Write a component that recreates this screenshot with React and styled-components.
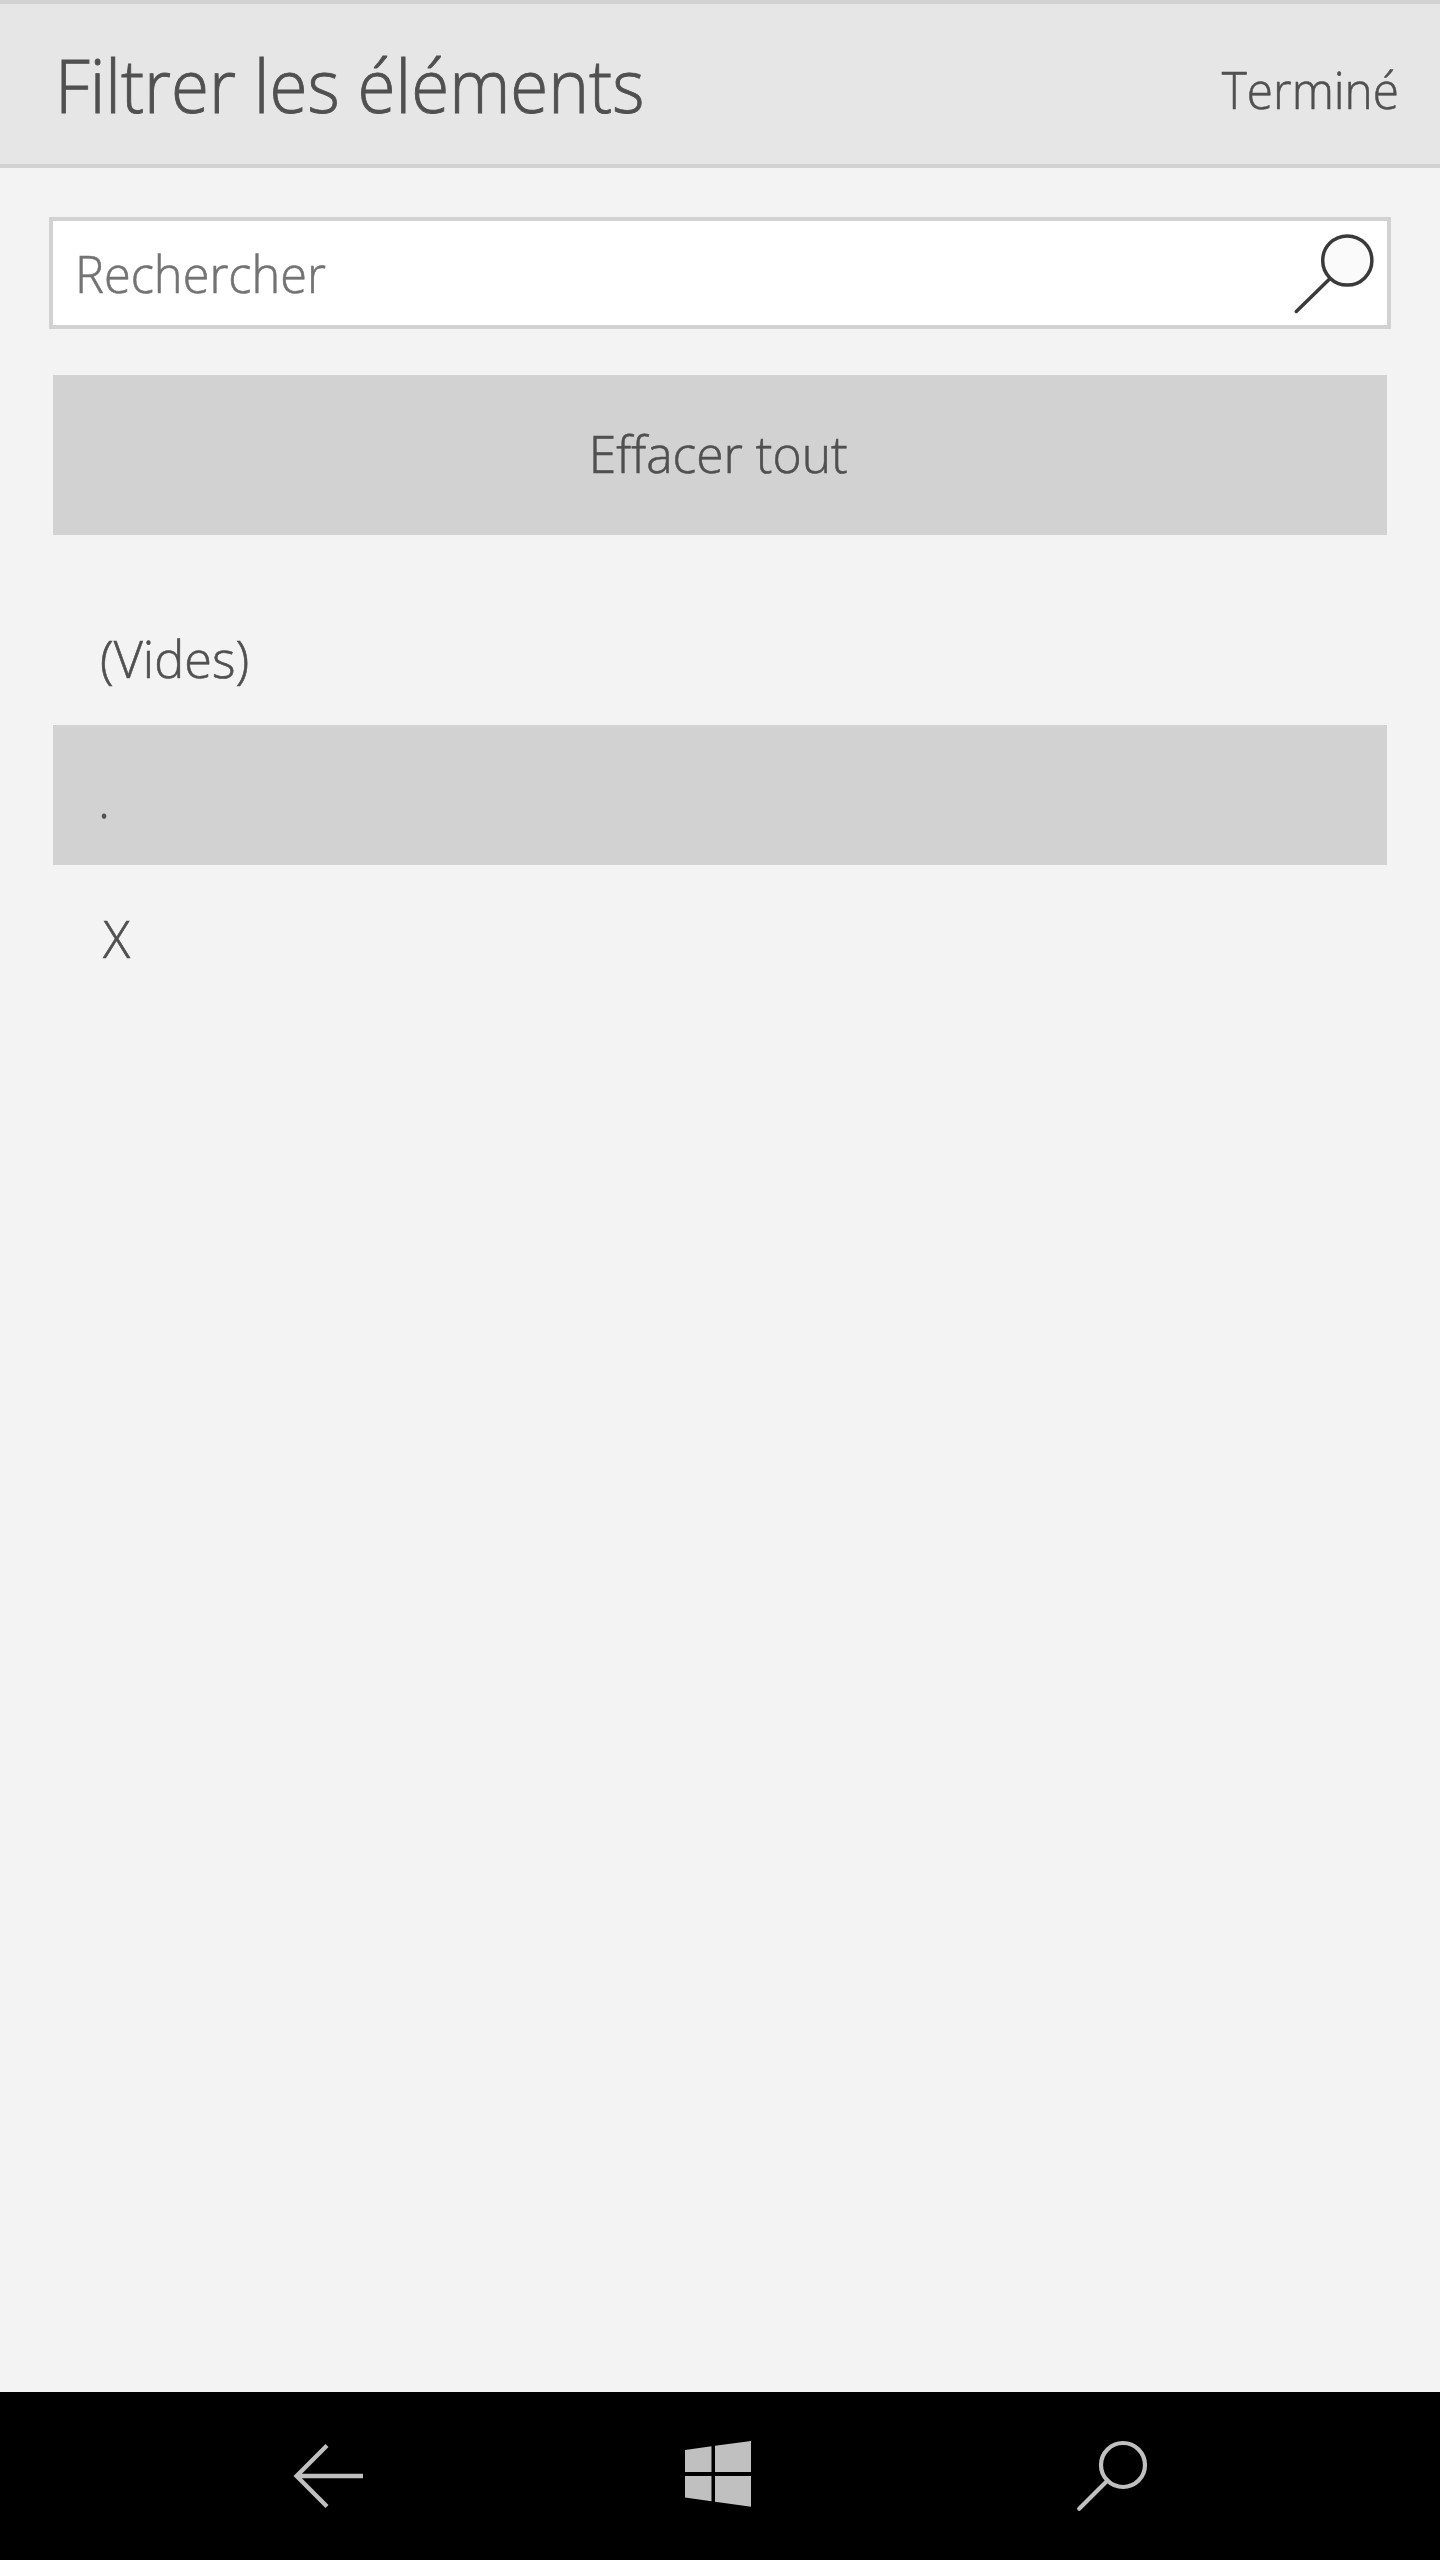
import React from 'react';
import styled, { createGlobalStyle } from 'styled-components';

const GlobalStyle = createGlobalStyle`
  * { box-sizing: border-box; }
  body { margin: 0; background: #f3f3f3; }
`;

const Screen = styled.div`
  display: flex;
  flex-direction: column;
  width: 1440px;
  height: 2560px;
  background: #f3f3f3;
  color: #505050;
  font-family: 'Open Sans', 'Noto Sans', sans-serif;
  font-weight: 300;
  font-size: 52px;
  line-height: 1;
  white-space: nowrap;
  font-variant-ligatures: none;
  -webkit-text-stroke: 0.6px currentColor;
`;

const Label = styled.span`
  display: inline-block;
  transform: scaleX(${(p) => p.$condense});
  transform-origin: ${(p) => p.$origin || 'left'} center;
`;

const Header = styled.header`
  display: flex;
  align-items: center;
  justify-content: space-between;
  flex: none;
  height: 168px;
  padding: 0 41px 0 55px;
  background: #e6e6e6;
  border: solid #d2d2d2;
  border-width: 4px 0;
`;

const Title = styled.h1`
  margin: 0;
  padding-top: 1px;
  font-size: 73px;
  font-weight: 300;
  line-height: 159px;
  -webkit-text-stroke-width: 0.9px;
`;

const Button = styled.button`
  margin: 0;
  border: 0;
  background: none;
  color: inherit;
  font: inherit;
  -webkit-text-stroke: inherit;
`;

const DoneButton = styled(Button)`
  padding: 10px 0 0;
`;

const Content = styled.main`
  display: flex;
  flex-direction: column;
  flex: 1;
  padding: 49px 53px 0;
`;

const SearchBox = styled.div`
  display: flex;
  align-items: center;
  justify-content: space-between;
  height: 112px;
  margin: 0 -4px 46px;
  padding: 0 8px 0 22px;
  background: #fff;
  border: 4px solid #d2d2d2;
`;

const Placeholder = styled(Label)`
  color: #737373;
  line-height: 104px;
`;

const ClearButton = styled(Button)`
  height: 160px;
  margin-bottom: 50px;
  padding: 0 4px 4px 0;
  background: #d2d2d2;
`;

const List = styled.ul`
  margin: 0;
  padding: 0;
  list-style: none;
`;

const Row = styled.li`
  display: flex;
  align-items: center;
  height: 140px;
  padding: 5px 0 0 ${(p) => p.$inset}px;
  background: ${(p) => (p.$selected ? '#d2d2d2' : 'transparent')};
`;

const NavBar = styled.nav`
  display: flex;
  align-items: center;
  justify-content: space-between;
  flex: none;
  height: 168px;
  padding: 0 292px;
  background: #000;
`;

const Icon = styled.svg`
  display: block;
  width: ${(p) => p.$size}px;
  height: ${(p) => p.$size}px;
  fill: none;
  stroke-linecap: round;
`;

const items = [
  { label: '(Vides)', inset: 47 },
  { label: '.', inset: 45, selected: true },
  { label: 'X', inset: 50 },
];

export default function App() {
  return (
    <>
      <GlobalStyle />
      <Screen>
        <Header>
          <Title>
            <Label $condense={0.947}>Filtrer les éléments</Label>
          </Title>
          <DoneButton>
            <Label $condense={0.918} $origin="right">Terminé</Label>
          </DoneButton>
        </Header>
        <Content>
          <SearchBox>
            <Placeholder $condense={0.937}>Rechercher</Placeholder>
            <Icon $size={88} viewBox="0 0 88 88" stroke="#3a3a3a" strokeWidth="3.5">
              <path d="M38.8 49.7 5.3 82.5" />
              <circle cx="56.3" cy="31.5" r="24.6" fill="#fafafa" />
            </Icon>
          </SearchBox>
          <ClearButton>
            <Label $condense={0.957} $origin="center">Effacer tout</Label>
          </ClearButton>
          <List>
            {items.map((item) => (
              <Row key={item.label} $inset={item.inset} $selected={item.selected}>
                <Label $condense={0.97}>{item.label}</Label>
              </Row>
            ))}
          </List>
        </Content>
        <NavBar>
          <Icon $size={72} viewBox="0 0 72 72" stroke="#c0c0c0" strokeWidth="4.4">
            <path d="M35 5.5 4.6 36 35 66.5M4.6 36H71" strokeLinecap="butt" />
          </Icon>
          <Icon $size={72} viewBox="0 0 72 72">
            <path
              fill="#c0c0c0"
              d="M1 10 27.5 6.2V32H1zM31 5.7 67 1V32H31zM1 36H27.5V61.2L1 57.5zM31 36H67V66.8L31 61.7z"
            />
          </Icon>
          <Icon $size={72} viewBox="0 0 72 72" stroke="#c0c0c0" strokeWidth="4.2">
            <path d="M31.5 40.5 3.2 68.8" />
            <circle cx="47" cy="25" r="22" />
          </Icon>
        </NavBar>
      </Screen>
    </>
  );
}
